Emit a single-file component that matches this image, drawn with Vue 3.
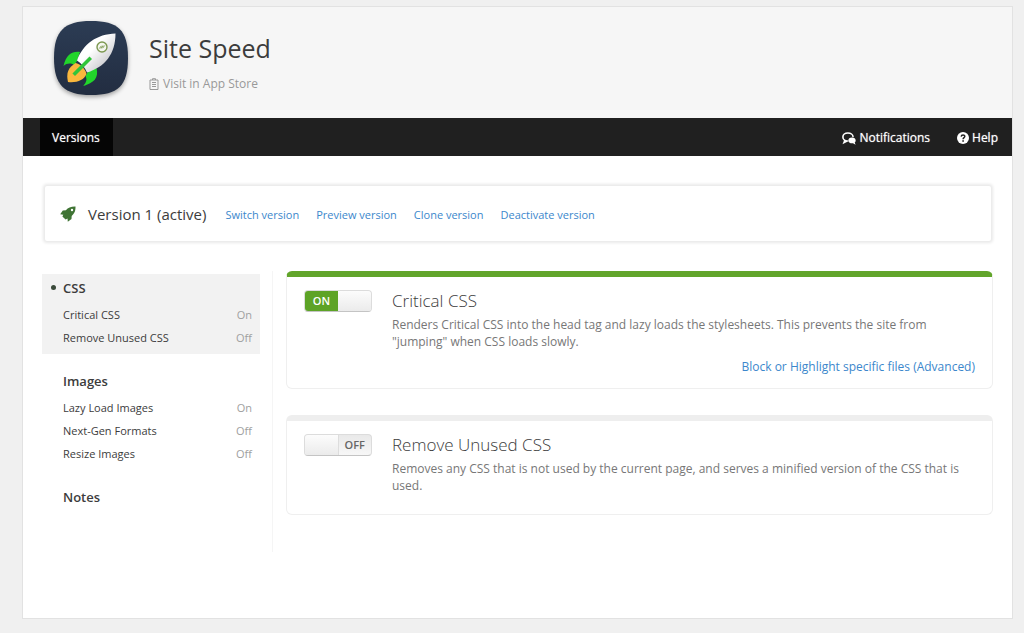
<script setup>
import { reactive } from 'vue'

const versionLinks = ['Switch version', 'Preview version', 'Clone version', 'Deactivate version']

const features = reactive([
  {
    id: 'critical-css',
    title: 'Critical CSS',
    text: 'Renders Critical CSS into the head tag and lazy loads the stylesheets. This prevents the site from "jumping" when CSS loads slowly.',
    link: 'Block or Highlight specific files (Advanced)',
    on: true,
  },
  {
    id: 'unused-css',
    title: 'Remove Unused CSS',
    text: 'Removes any CSS that is not used by the current page, and serves a minified version of the CSS that is used.',
    link: '',
    on: false,
  },
])

const groups = [
  {
    title: 'CSS',
    active: true,
    items: [
      { name: 'Critical CSS', state: 'On' },
      { name: 'Remove Unused CSS', state: 'Off' },
    ],
  },
  {
    title: 'Images',
    active: false,
    items: [
      { name: 'Lazy Load Images', state: 'On' },
      { name: 'Next-Gen Formats', state: 'Off' },
      { name: 'Resize Images', state: 'Off' },
    ],
  },
  { title: 'Notes', active: false, items: [] },
]
</script>

<template>
  <div class="page">
    <div class="panel">
      <header class="header">
        <svg class="logo" viewBox="0 0 74 74" aria-hidden="true">
          <defs>
            <linearGradient id="hull" x1="0" y1="0" x2="1" y2="1">
              <stop offset="0.4" stop-color="#ffffff" />
              <stop offset="0.8" stop-color="#cacace" />
            </linearGradient>
            <linearGradient id="tile" x1="0" y1="0" x2="0" y2="1">
              <stop offset="0" stop-color="#2c3c54" />
              <stop offset="1" stop-color="#222d41" />
            </linearGradient>
          </defs>
          <path d="M37 0C64 0 74 9 74 37S64 74 37 74 0 64 0 37 10 0 37 0Z" fill="url(#tile)" />
          <path d="M26 31C18 30 12 34 9.500 45C13 42 17 42 20 44L23 40Z" fill="#22d52b" />
          <path d="M42.500 47C45 57 40 62 29 65C33 61 33 58 31.500 55L35 49Z" fill="#22d52b" />
          <path d="M61.500 12.500C43 13 29 23 23 39.500C27 42 31 46 33 51.500C51 46 61.500 33 61.500 12.500Z" fill="url(#hull)" />
          <path d="M21.500 42C14 47 12 52 14 61C23 62 30 59 32.500 53C31 47 26 43 21.500 42Z" fill="#fab73d" />
          <path d="M35.500 38L21 52.500" stroke="#2fc53b" stroke-width="3.6" stroke-linecap="square" />
          <circle cx="48" cy="26" r="5" fill="#f4f6ef" stroke="#7c9850" stroke-width="1.4" />
          <path d="M45.300 27.500L47.500 24.800M47 27.500L49 24.500M48.500 27.200L50.700 24.500" fill="none" stroke="#7c9850" stroke-width="1" />
        </svg>
        <div class="heading">
          <h1>Site Speed</h1>
          <a class="store" href="#">
            <svg viewBox="0 0 10 12" aria-hidden="true">
              <path d="M1 2H9V11.500H1ZM3.500 2V.7H6.500V2" fill="none" stroke="currentColor" />
              <path d="M3 4.500H7M3 6.500H7M3 8.500H7" stroke="currentColor" />
            </svg>
            Visit in App Store
          </a>
        </div>
      </header>

      <nav class="nav">
        <a class="tab" href="#">Versions</a>
        <div class="tools">
          <a href="#">
            <svg class="chat" viewBox="0 0 14 13" aria-hidden="true">
              <path d="M5.500 9C2.600 9 .9 7 .9 5 .9 2.700 3 1 5.900 1S10.900 2.600 11 4.500M2.900 8.200 2 10.600 5 9" fill="none" stroke="#fff" stroke-width="1.600" stroke-linecap="round" />
              <path d="M10 5.500c2.200 0 3.700 1.200 3.700 2.900 0 .9-.4 1.600-1 2.100l.9 2.200-2.600-1.400c-2.800.3-4.700-1-4.700-2.900s1.500-2.900 3.700-2.900Z" fill="#fff" />
            </svg>
            Notifications
          </a>
          <a href="#">
            <svg class="help" viewBox="0 0 12 12" aria-hidden="true">
              <circle cx="6" cy="6" r="6" fill="#fff" />
              <path d="M4.200 4.600C4.300 2.500 7.900 2.600 7.800 4.500 7.700 5.700 6.100 5.700 6.100 7.200" fill="none" stroke="#202020" stroke-width="1.500" />
              <path d="M5.300 8.200H6.900V9.700H5.300Z" fill="#202020" />
            </svg>
            Help
          </a>
        </div>
      </nav>

      <main class="main">
        <section class="version">
          <svg class="rocket" viewBox="0 0 16 16" aria-hidden="true">
            <path d="M15.500.5C10.800.4 8.200 1.600 5.900 4.300L2.800 4.600.2 8.300 3.300 8.700 2.400 10.400 5.600 13.600 7.500 12.600 7.800 15.800 11.500 13.100 11.700 9.900C14.400 7.500 15.600 5.200 15.500.5Z" fill="#3f7434" />
            <circle cx="12" cy="4" r="1.200" fill="#fff" />
          </svg>
          <h2>Version 1 (active)</h2>
          <a v-for="link in versionLinks" :key="link" href="#">{{ link }}</a>
        </section>

        <div class="columns">
          <aside class="sidebar">
            <section v-for="group in groups" :key="group.title" class="group" :class="{ active: group.active }">
              <h3>{{ group.title }}</h3>
              <ul v-if="group.items.length">
                <li v-for="item in group.items" :key="item.name">
                  <a href="#">{{ item.name }}</a>
                  <span>{{ item.state }}</span>
                </li>
              </ul>
            </section>
          </aside>

          <div class="cards">
            <article v-for="feature in features" :key="feature.id" class="card" :class="{ enabled: feature.on }">
              <label class="switch" :class="{ on: feature.on }">
                <input v-model="feature.on" type="checkbox" :aria-label="feature.title" />
                <span class="state">{{ feature.on ? 'ON' : 'OFF' }}</span>
                <span class="knob"></span>
              </label>
              <div class="body">
                <h3>{{ feature.title }}</h3>
                <p>{{ feature.text }}</p>
                <a v-if="feature.link" class="advanced" href="#">{{ feature.link }}</a>
              </div>
            </article>
          </div>
        </div>
      </main>
    </div>
  </div>
</template>

<style>
body {
  background: #f0f0f0;
}
</style>

<style scoped>
.page {
  box-sizing: border-box;
  min-height: 100vh;
  padding: 6px 11px 14px 22px;
  display: flex;
  font-family: "Open Sans", "Noto Sans", sans-serif;
  font-size: 12px;
  color: #3c3c3c;
}
h1, h2, h3, p, ul {
  margin: 0;
  padding: 0;
}
a {
  color: #3c87cc;
  text-decoration: none;
}
.panel {
  flex: 1;
  min-width: 0;
  background: #fff;
  border: 1px solid #e2e2e2;
}
.header {
  display: flex;
  gap: 21px;
  padding: 14px 31px 23px;
  background: #f6f6f6;
}
.logo {
  width: 74px;
  height: 74px;
  filter: drop-shadow(0 2px 2px rgba(0, 0, 0, 0.35));
}
.heading {
  display: flex;
  flex-direction: column;
  align-items: flex-start;
  gap: 10px;
  padding-top: 9px;
}
h1 {
  font-size: 25px;
  line-height: 36px;
  font-weight: 400;
}
.store {
  display: flex;
  align-items: center;
  gap: 4px;
  line-height: 16px;
  color: #999;
}
.store svg {
  width: 10px;
  height: 12px;
}
.nav {
  display: flex;
  justify-content: space-between;
  background: #202020;
  padding: 0 14px 0 17px;
  line-height: 36px;
  text-shadow: 0 0 1px rgba(255, 255, 255, 0.7);
}
.nav a {
  color: #fff;
  padding-top: 2px;
}
.nav .tab {
  background: #050505;
  padding: 2px 13px 0 12px;
}
.tools {
  display: flex;
  gap: 27px;
}
.tools a {
  display: flex;
  align-items: center;
  gap: 3px;
}
.chat {
  width: 14px;
  height: 13px;
}
.help {
  width: 12px;
  height: 12px;
}
.main {
  padding: 30px 19px 32px;
}
.version {
  display: flex;
  align-items: center;
  height: 55px;
  margin: 0 2px 0 3px;
  padding-left: 15px;
  gap: 17px;
  box-shadow: 0 0 3px 2px #e9e9e9;
  border-radius: 2px;
  font-size: 11px;
}
.rocket {
  width: 16px;
  height: 16px;
  margin-right: -5px;
}
h2 {
  font-size: 15px;
  font-weight: 400;
  line-height: 24px;
  margin-right: 2px;
}
.version a {
  line-height: 16px;
  padding-top: 3px;
}
.columns {
  display: flex;
  margin-top: 30px;
}
.sidebar {
  display: flex;
  flex-direction: column;
  gap: 13px;
  flex: 0 0 218px;
  min-height: 278px;
  padding: 3px 12px 0 0;
  border-right: 1px solid #f5f5f5;
}
.group {
  padding: 2px 8px 5px 21px;
}
.group.active {
  background: #f2f2f2;
}
.group h3 {
  font-size: 13px;
  line-height: 24px;
  font-weight: 600;
  position: relative;
}
.group.active h3::before {
  content: "";
  position: absolute;
  left: -12px;
  top: 9px;
  width: 5px;
  height: 5px;
  border-radius: 50%;
  background: #3b4a3b;
}
.group ul {
  list-style: none;
  margin-top: 3px;
}
.group li {
  display: flex;
  justify-content: space-between;
  font-size: 11px;
  line-height: 23px;
}
.group li a {
  color: #3c3c3c;
}
.group li span {
  color: #a0a0a0;
}
.cards {
  flex: 1;
  min-width: 0;
  display: flex;
  flex-direction: column;
  gap: 26px;
  padding-left: 13px;
}
.card {
  display: flex;
  gap: 20px;
  align-items: flex-start;
  padding: 13px 17px 12px;
  border: 1px solid #efefef;
  border-top: 6px solid #eee;
  border-radius: 6px;
}
.card.enabled {
  border-top-color: #62a52b;
}
.body {
  flex: 1;
  min-width: 0;
  display: flex;
  flex-direction: column;
}
.body h3 {
  font-size: 17px;
  line-height: 22px;
  font-weight: 300;
}
.body p {
  margin: 4px 0 8px;
  line-height: 17px;
  color: #777;
}
.advanced {
  align-self: flex-end;
  line-height: 18px;
}
.switch {
  position: relative;
  display: flex;
  flex-direction: row-reverse;
  box-sizing: border-box;
  width: 68px;
  height: 22px;
  border: 1px solid #dcdcdc;
  border-bottom-color: #c4c4c4;
  border-radius: 4px;
  overflow: hidden;
  background: linear-gradient(#e9e9e9, #f7f7f7);
  font-size: 11px;
  line-height: 20px;
  font-weight: 600;
  color: #666;
  cursor: pointer;
}
.switch input {
  position: absolute;
  inset: 0;
  margin: 0;
  opacity: 0;
}
.switch.on {
  flex-direction: row;
}
.state,
.knob {
  flex: 1;
  text-align: center;
}
.knob {
  background: linear-gradient(#fcfcfc, #ebebeb);
  border-right: 1px solid #ddd;
}
.on .state {
  background: #5da326;
  color: #fff;
}
.on .knob {
  border: 0;
}
</style>
